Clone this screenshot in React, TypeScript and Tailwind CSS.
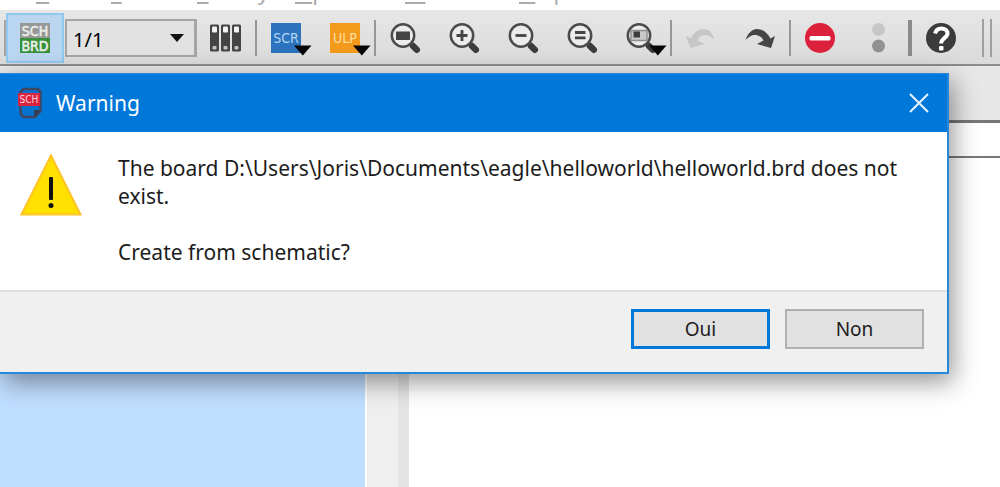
import type { ReactNode } from "react";

const menus = [
  { key: "V", rest: "iew", width: "w-[75px]" },
  { key: "T", rest: "ools", width: "w-[86px]" },
  { key: "L", rest: "ibrary", width: "w-[98px]" },
  { key: "O", rest: "ptions", width: "w-[110px]" },
  { key: "W", rest: "indow", width: "w-[114px]" },
  { key: "H", rest: "elp", width: "w-[75px]" },
];

const iconFont = "DejaVu Sans Condensed, Liberation Mono, monospace";

function Separator() {
  return <div className="mx-[14px] h-9 w-[2px] shrink-0 bg-[#979797]" />;
}

function ToolButton({ label, children }: { label: string; children: ReactNode }) {
  return (
    <button aria-label={label} className="block shrink-0">
      <svg width="30" height="30" viewBox="0 0 30 30" className="overflow-visible">
        {children}
      </svg>
    </button>
  );
}

function DropArrow() {
  return <path d="M23 22.500H40.500L31.800 32.500Z" fill="#050505" />;
}

function Lens({ children }: { children: ReactNode }) {
  return (
    <>
      <path d="M20 20L22.500 22.500" stroke="#424242" strokeWidth="3.500" />
      <path d="M23 23L26.800 26.800" stroke="#3c3c3c" strokeWidth="6.500" strokeLinecap="round" />
      <circle cx="13" cy="12.500" r="11.200" fill="#ececec" stroke="#4b4b4b" strokeWidth="2.500" />
      {children}
    </>
  );
}

function Toolbar() {
  return (
    <div className="flex h-[56px] shrink-0 items-center overflow-hidden border-b-2 border-[#8c8c8c] bg-linear-to-b from-[#e7e7e7] to-[#dadada] pt-[2px] pl-1">
      <div className="h-9 w-[2px] shrink-0 bg-[#a5a5a5]" />
      <button aria-label="Switch to board" className="flex h-[50px] w-[58px] shrink-0 items-center justify-center border-2 border-[#90c8f0] bg-[#b9d5ef]">
        <svg width="30" height="30" viewBox="0 0 30 30">
          <rect width="30" height="15" fill="#979797" />
          <rect y="15" width="30" height="15" fill="#37913a" />
          <g fill="#e9eee9" stroke="#e9eee9" strokeWidth="0.600" fontFamily={iconFont} fontSize="14" textAnchor="middle">
            <text x="15" y="12.800">SCH</text>
            <text x="15" y="27.800">BRD</text>
          </g>
        </svg>
      </button>
      <div className="relative ml-px shrink-0">
        <select aria-label="Sheet" className="block h-[38px] w-[132px] appearance-none border-2 border-r-3 border-[#a5a5a5] bg-[#e2e2e2] pt-[3px] pl-[6px] font-['Noto_Sans',sans-serif] text-[20px] text-black">
          <option>1/1</option>
        </select>
        <svg width="14" height="8" viewBox="0 0 14 8" className="pointer-events-none absolute top-[15px] right-[13px]">
          <path d="M0 0H14L7 8Z" fill="#111" />
        </svg>
      </div>
      <div className="mr-px ml-[13px] shrink-0">
        <ToolButton label="Sheets">
          {[0, 11, 22].map((x) => (
            <g key={x}>
              <rect x={x} y="1.500" width="9" height="27" rx="1.500" fill="#444" />
              <rect x={x + 2} y="3.500" width="5" height="6" rx="1" fill="#f2f2f2" />
              <rect x={x + 2.5} y="23" width="4" height="3.500" rx="1" fill="#c4c4c4" />
            </g>
          ))}
        </ToolButton>
      </div>
      <Separator />
      <div className="flex shrink-0 gap-[29px]">
        <ToolButton label="Run script">
          <rect width="30" height="30" fill="#2b73bd" />
          <text x="15" y="20" textAnchor="middle" fill="#b3d5f4" fontFamily={iconFont} fontSize="14">SCR</text>
          <DropArrow />
        </ToolButton>
        <ToolButton label="Run ULP">
          <rect width="30" height="30" fill="#f39a1c" />
          <text x="15" y="20" textAnchor="middle" fill="#ffdd9c" fontFamily={iconFont} fontSize="14">ULP</text>
          <DropArrow />
        </ToolButton>
      </div>
      <Separator />
      <div className="flex shrink-0 gap-[29px]">
        <ToolButton label="Zoom to fit">
          <Lens>
            <rect x="6" y="8.500" width="14" height="8.500" fill="#444" />
          </Lens>
        </ToolButton>
        <ToolButton label="Zoom in">
          <Lens>
            <path d="M7.500 12.500H18.500M13 7V18" stroke="#444" strokeWidth="2.800" />
          </Lens>
        </ToolButton>
        <ToolButton label="Zoom out">
          <Lens>
            <path d="M7.500 12.500H18.500" stroke="#444" strokeWidth="2.800" />
          </Lens>
        </ToolButton>
        <ToolButton label="Redraw">
          <Lens>
            <path d="M8 9.500H18.500M8 14.800H18.500" stroke="#444" strokeWidth="2.800" />
          </Lens>
        </ToolButton>
        <ToolButton label="Zoom select">
          <Lens>
            <rect x="5" y="7.500" width="16" height="10" fill="#c9c9c9" stroke="#8e8e8e" strokeWidth="1.500" />
            <rect x="7.500" y="8.500" width="6.500" height="6" fill="#3f3f3f" />
          </Lens>
          <DropArrow />
        </ToolButton>
      </div>
      <Separator />
      <div className="flex shrink-0 gap-[29px]">
        <ToolButton label="Undo">
          <path d="M0 13L4.500 15.500C8 9 13 6 18 6C23 6 26.500 10 28.500 17C24.500 12.500 21 11.500 18 12C15 12.500 12.500 14.500 11.500 17.500L18.500 21L4.500 25Z" fill="#c6c6c6" />
        </ToolButton>
        <ToolButton label="Redo">
          <path d="M30 13L25.500 15.500C22 9 17 6 12 6C7 6 3 10 0.500 17C5 12.500 8 11.500 11 12C14 12.500 17.500 14.500 18.500 17.500L12 21L26 25Z" fill="#454545" />
        </ToolButton>
      </div>
      <Separator />
      <div className="flex shrink-0 gap-[29px]">
        <ToolButton label="Stop">
          <circle cx="15" cy="15" r="15" fill="#dc213c" />
          <rect x="4.500" y="13" width="21" height="4.500" rx="1.500" fill="#fff" />
        </ToolButton>
        <ToolButton label="Go">
          <circle cx="14.500" cy="6.500" r="6.500" fill="#c6c6c6" />
          <circle cx="14.500" cy="23" r="6.500" fill="#919191" />
        </ToolButton>
      </div>
      <div className="mx-[14px] h-9 w-1 shrink-0 bg-[#8b8b8b]" />
      <ToolButton label="Help">
        <circle cx="15" cy="15" r="15" fill="#3b3b3b" />
        <path d="M9 10.500C10 7 12 5.500 15.200 5.500C19 5.500 21.500 7.500 21.500 10.500C21.500 15 15.200 15 15.200 20.500" fill="none" stroke="#fff" strokeWidth="4" />
        <rect x="13" y="23" width="4.500" height="4.500" rx="1" fill="#fff" />
      </ToolButton>
      <div className="ml-[26px] h-[38px] w-[2px] shrink-0 bg-[#a0a0a0]" />
      <div className="ml-[6px] h-[38px] w-[2px] shrink-0 bg-[#a0a0a0]" />
    </div>
  );
}

function WarningDialog() {
  return (
    <div role="dialog" aria-label="Warning" className="absolute top-[73px] right-[51px] left-0 border-t border-r-2 border-b-2 border-[#2488dc] bg-white shadow-[4px_8px_24px_rgba(0,0,0,0.42)]">
      <div className="flex h-[58px] items-center bg-[#0078d9] px-[18px] text-white">
        <svg width="24" height="32" viewBox="0 0 24 32">
          <path d="M5.500 2H20L22.500 4.500V24L17 30H5.500L2.500 27V5Z" fill="#0873cf" stroke="#3e4863" strokeWidth="2.500" />
          <path d="M23 23L16 30V23Z" fill="#333c50" />
          <rect y="6" width="22" height="13" rx="1" fill="#dc2340" />
          <text x="11" y="16.300" textAnchor="middle" fill="#ffd4dc" fontFamily={iconFont} fontSize="10">SCH</text>
        </svg>
        <h1 className="ml-[14px] flex-1 text-[21px] leading-7">Warning</h1>
        <button aria-label="Close">
          <svg width="20" height="20" viewBox="0 0 20 20">
            <path d="M1 1L19 19M19 1L1 19" stroke="#e8f3fd" strokeWidth="2" />
          </svg>
        </button>
      </div>
      <div className="flex gap-9 pt-[22px] pr-6 pb-6 pl-5">
        <svg width="62" height="62" viewBox="0 0 62 62" className="shrink-0">
          <path d="M31 1.500L60.500 60.500H1.500Z" fill="#ffe000" stroke="#ffc328" strokeWidth="2" />
          <rect x="29" y="23" width="4" height="23" rx="1" fill="#111" />
          <circle cx="31" cy="51.500" r="2.500" fill="#111" />
        </svg>
        <div className="text-[21px] leading-7 text-[#1c1c1c]">
          <p>The board D:\Users\Joris\Documents\eagle\helloworld\helloworld.brd does not exist.</p>
          <p className="mt-7">Create from schematic?</p>
        </div>
      </div>
      <div className="flex justify-end gap-[15px] border-t-2 border-[#e0e0e0] bg-[#f0f0f0] pt-[17px] pr-[23px] pb-[23px] text-[19px] leading-7 text-[#1c1c1c]">
        <button className="h-10 w-[139px] border-3 border-[#0078d9] bg-[#e1e1e1]">Oui</button>
        <button className="h-10 w-[139px] border-2 border-[#b0b0b0] bg-[#e1e1e1]">Non</button>
      </div>
    </div>
  );
}

export default function App() {
  return (
    <div className="relative flex min-h-screen flex-col overflow-hidden bg-white font-['Noto_Sans','Open_Sans',sans-serif]">
      <nav className="flex h-[10px] shrink-0 items-end overflow-hidden pl-9 text-[22px] leading-7 text-[#aaa]">
        {menus.map((m) => (
          <a key={m.key} href="#" className={"shrink-0 pb-[5px] " + m.width}>
            <span className="underline decoration-2 underline-offset-2">{m.key}</span>
            {m.rest}
          </a>
        ))}
      </nav>
      <Toolbar />
      <div className="h-[57px] shrink-0 border-b-3 border-[#777] bg-[#e7e7e7]" />
      <div className="h-[35px] shrink-0 border-b-2 border-[#777] bg-white" />
      <div className="flex flex-1">
        <div className="w-[365px] bg-[#c0deff]" />
        <div className="ml-[2px] w-[31px] bg-[#efefef]" />
        <div className="w-[11px] bg-[#e4e4e4]" />
        <div className="flex-1 bg-white" />
      </div>
      <WarningDialog />
    </div>
  );
}
